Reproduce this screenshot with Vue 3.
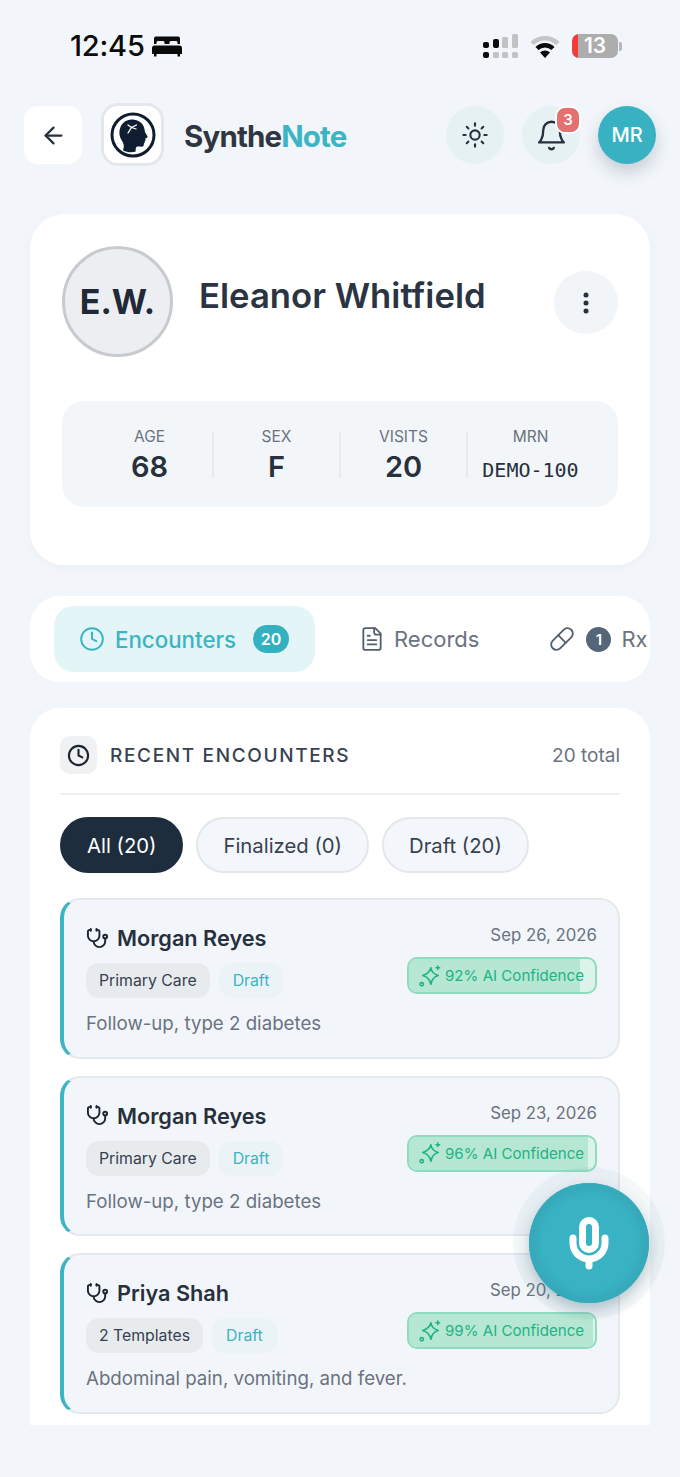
<template>
  <div class="phone">
    <div class="status-bar">
      <div class="status-left">
        <span class="time">12:45</span>
        <svg class="bed" viewBox="0 0 30 22" fill="#0b0b0b">
          <path d="M4 1.500h22a2 2 0 0 1 2 2V9h-2.500V7.500a1.500 1.500 0 0 0-1.500-1.500h-5a1.500 1.500 0 0 0-1.500 1.500V9h-5V7.500A1.500 1.500 0 0 0 11 6H6a1.500 1.500 0 0 0-1.500 1.500V9H2V3.500a2 2 0 0 1 2-2z" />
          <path d="M2.500 10.500h25a2.500 2.500 0 0 1 2.500 2.500v6h-2v2.500h-2.500V19h-21v2.500H2V19H0v-6a2.500 2.500 0 0 1 2.500-2.500z" />
        </svg>
      </div>
      <div class="status-right">
        <svg class="signal" width="35" height="24" viewBox="0 0 35 24">
          <rect x="0" y="8" width="6" height="6" rx="2" fill="#0b0b0b" />
          <rect x="10" y="5" width="6" height="9" rx="2" fill="#0b0b0b" />
          <rect x="19" y="3" width="6" height="11" rx="1.500" fill="#c0c2c4" />
          <rect x="29" y="0" width="6" height="14" rx="1.500" fill="#c0c2c4" />
          <rect x="0" y="18" width="6" height="6" rx="2" fill="#0b0b0b" />
          <rect x="10" y="18" width="6" height="6" rx="1.500" fill="#c0c2c4" />
          <rect x="19" y="18" width="6" height="6" rx="1.500" fill="#c0c2c4" />
          <rect x="29" y="18" width="6" height="6" rx="1.500" fill="#c0c2c4" />
        </svg>
        <svg class="wifi" width="30" height="23" viewBox="0 0 30 23" fill="none" stroke-width="4.500">
          <path d="M2 8.500a18.500 18.500 0 0 1 26 0" stroke="#c4c6c8" />
          <path d="M7 13.500a11.500 11.500 0 0 1 16 0" stroke="#0b0b0b" />
          <path d="M15 23l-5-5.500a7 7 0 0 1 10 0z" fill="#0b0b0b" stroke="none" />
        </svg>
        <div class="battery">
          <span class="battery-level">13</span>
          <span class="battery-cap"></span>
        </div>
      </div>
    </div>

    <header class="app-header">
      <button class="back-btn">
        <svg width="27" height="27" viewBox="0 0 24 24" fill="none" stroke="#27303c" stroke-width="2" stroke-linecap="round" stroke-linejoin="round">
          <path d="m12 19-7-7 7-7" />
          <path d="M19 12H5" />
        </svg>
      </button>
      <div class="logo">
        <svg width="46" height="46" viewBox="0 0 46 46">
          <circle cx="23" cy="23" r="21" fill="#fff" stroke="#0f1d30" stroke-width="3" />
          <path d="M22 7.500c7.500 0 12.500 5 12.800 11.500 0 1.500 3 5.200 2.900 6-.2 1-2.200 1-2.400 1.700-.2 1 .6 1.400.1 2-.5.600-.9.700-.8 1.400.2.800-.2 1.300-.8 1.600.2 1.800-.4 3-2.300 3-2 0-3.800-.5-5 .4-1 .9-.8 3-.8 4.400-3.800 1.400-8.500 1-12.800-1.200 1.600-3.500 1-6.200-.5-8.800-1.600-2.700-3.300-5.500-3-9.600C9.900 12.800 14.800 7.500 22 7.500z" fill="#0f1d30" />
          <path d="M18 21l3.500-5.500 5-2.500M21.500 15.500l-3.500-2.500M21.500 15.500l4.500 1.500" fill="none" stroke="#fff" stroke-width="1.300" stroke-linecap="round" />
        </svg>
      </div>
      <div class="brand">Synthe<span class="brand-accent">Note</span></div>
      <div class="header-actions">
        <button class="round-btn">
          <svg width="28" height="28" viewBox="0 0 24 24" fill="none" stroke="#27303c" stroke-width="1.800" stroke-linecap="round">
            <circle cx="12" cy="12" r="4" />
            <path d="M12 2v2" />
            <path d="M12 20v2" />
            <path d="m4.930 4.930 1.410 1.410" />
            <path d="m17.660 17.660 1.410 1.410" />
            <path d="M2 12h2" />
            <path d="M20 12h2" />
            <path d="m6.340 17.660-1.410 1.410" />
            <path d="m19.070 4.930-1.410 1.410" />
          </svg>
        </button>
        <button class="round-btn bell-btn">
          <svg width="33" height="33" viewBox="0 0 24 24" fill="none" stroke="#27303c" stroke-width="1.700" stroke-linecap="round" stroke-linejoin="round">
            <path d="M6 8a6 6 0 0 1 12 0c0 7 3 9 3 9H3s3-2 3-9" />
            <path d="M10.300 21a1.940 1.940 0 0 0 3.400 0" />
          </svg>
          <span class="bell-count">3</span>
        </button>
        <div class="user-avatar">MR</div>
      </div>
    </header>

    <main class="content">
      <section class="profile-card">
        <div class="profile-top">
          <div class="patient-avatar">E.W.</div>
          <h1 class="patient-name">Eleanor Whitfield</h1>
          <button class="more-btn">
            <svg width="6" height="24" viewBox="0 0 6 24" fill="#27303c">
              <circle cx="3" cy="4" r="2.500" />
              <circle cx="3" cy="12" r="2.500" />
              <circle cx="3" cy="20" r="2.500" />
            </svg>
          </button>
        </div>
        <div class="stats">
          <div v-for="stat in stats" :key="stat.label" class="stat">
            <span class="stat-label">{{ stat.label }}</span>
            <span class="stat-value" :class="{ mono: stat.mono }">{{ stat.value }}</span>
          </div>
        </div>
      </section>

      <nav class="tabs">
        <div class="tab tab-active">
          <svg width="26" height="26" viewBox="0 0 24 24" fill="none" stroke="#3cb4c3" stroke-width="1.800" stroke-linecap="round" stroke-linejoin="round">
            <circle cx="12" cy="12" r="10" />
            <polyline points="12 6 12 12 16 14" />
          </svg>
          <span>Encounters</span>
          <span class="tab-count">20</span>
        </div>
        <div class="tab tab-records">
          <svg width="26" height="26" viewBox="0 0 24 24" fill="none" stroke="#55606e" stroke-width="1.700" stroke-linecap="round" stroke-linejoin="round">
            <path d="M15 2H6a2 2 0 0 0-2 2v16a2 2 0 0 0 2 2h12a2 2 0 0 0 2-2V7Z" />
            <path d="M14 2v4a2 2 0 0 0 2 2h4" />
            <path d="M10 9H8" />
            <path d="M16 13H8" />
            <path d="M16 17H8" />
          </svg>
          <span>Records</span>
        </div>
        <div class="tab tab-rx">
          <svg width="26" height="26" viewBox="0 0 24 24" fill="none" stroke="#55606e" stroke-width="1.700" stroke-linecap="round" stroke-linejoin="round">
            <path d="m10.500 20.500 10-10a4.950 4.950 0 1 0-7-7l-10 10a4.950 4.950 0 1 0 7 7Z" />
            <path d="m8.500 8.500 7 7" />
          </svg>
          <span class="rx-count">1</span>
          <span>Rx</span>
        </div>
      </nav>

      <section class="encounters">
        <div class="section-head">
          <span class="section-icon">
            <svg width="23" height="23" viewBox="0 0 24 24" fill="none" stroke="#1c2633" stroke-width="2.200" stroke-linecap="round" stroke-linejoin="round">
              <circle cx="12" cy="12" r="10" />
              <polyline points="12 6 12 12 16 14" />
            </svg>
          </span>
          <h2 class="section-title">RECENT ENCOUNTERS</h2>
          <span class="section-total">20 total</span>
        </div>

        <div class="filters">
          <button v-for="filter in filters" :key="filter.label" class="filter" :class="{ 'filter-active': filter.active }">
            {{ filter.label }}
          </button>
        </div>

        <div class="encounter-list">
          <article v-for="item in encounters" :key="item.date" class="encounter">
            <div class="encounter-main">
              <div class="encounter-name">
                <svg width="23" height="23" viewBox="0 0 24 24" fill="none" stroke="#1c2633" stroke-width="2" stroke-linecap="round" stroke-linejoin="round">
                  <path d="M11 2v2" />
                  <path d="M5 2v2" />
                  <path d="M5 3H4a2 2 0 0 0-2 2v4a6 6 0 0 0 12 0V5a2 2 0 0 0-2-2h-1" />
                  <path d="M8 15a6 6 0 0 0 12 0v-3" />
                  <circle cx="20" cy="10" r="2" />
                </svg>
                <span>{{ item.name }}</span>
              </div>
              <div class="encounter-tags">
                <span class="tag">{{ item.tag }}</span>
                <span class="tag tag-draft">Draft</span>
              </div>
              <p class="encounter-desc">{{ item.desc }}</p>
            </div>
            <div class="encounter-side">
              <span class="encounter-date">{{ item.date }}</span>
              <div class="confidence">
                <span class="confidence-fill" :style="{ width: item.confidence + '%' }"></span>
                <svg class="confidence-icon" width="22" height="22" viewBox="0 0 24 24" fill="none" stroke="#1fb384" stroke-width="1.700" stroke-linecap="round" stroke-linejoin="round">
                  <path d="M13 3c.6 4.600 3 7 8 8.500-4.400 1.200-7 3.400-8 9.500-1.400-6-3.800-8.200-9-9.500 5.200-1.500 7.800-3.900 9-8.500z" />
                  <path d="M20.500 1v4" />
                  <path d="M22.500 3h-4" />
                  <circle cx="3" cy="21" r="1.800" />
                </svg>
                <span class="confidence-text">{{ item.confidence }}% AI Confidence</span>
              </div>
            </div>
          </article>
        </div>
      </section>
    </main>

    <button class="record-fab">
      <svg width="44" height="54" viewBox="0 0 44 54" fill="none" stroke="#fff" stroke-linecap="round">
        <rect x="15.500" y="4.500" width="13" height="29" rx="6.500" stroke-width="7" />
        <path d="M6 22v5a16 16 0 0 0 32 0v-5" stroke-width="7" />
        <path d="M22 44v6" stroke-width="7" />
      </svg>
    </button>
  </div>
</template>

<script setup>
const stats = [
  { label: 'AGE', value: '68' },
  { label: 'SEX', value: 'F' },
  { label: 'VISITS', value: '20' },
  { label: 'MRN', value: 'DEMO-100', mono: true }
];

const filters = [
  { label: 'All (20)', active: true },
  { label: 'Finalized (0)' },
  { label: 'Draft (20)' }
];

const encounters = [
  { name: 'Morgan Reyes', tag: 'Primary Care', desc: 'Follow-up, type 2 diabetes', date: 'Sep 26, 2026', confidence: 92 },
  { name: 'Morgan Reyes', tag: 'Primary Care', desc: 'Follow-up, type 2 diabetes', date: 'Sep 23, 2026', confidence: 96 },
  { name: 'Priya Shah', tag: '2 Templates', desc: 'Abdominal pain, vomiting, and fever.', date: 'Sep 20, 2026', confidence: 99 }
];
</script>

<style>
body {
  background: #f2f6fa;
}
</style>

<style scoped>
.phone {
  position: relative;
  width: 680px;
  height: 1477px;
  overflow: hidden;
  background: #f2f6fa;
  color: #2b3442;
  font-family: Inter, "Noto Sans", sans-serif;
}

button {
  border: none;
  padding: 0;
  font-family: inherit;
  display: flex;
  align-items: center;
  justify-content: center;
}

.status-bar {
  height: 92px;
  box-sizing: border-box;
  padding: 28px 58px 0 70px;
  display: flex;
  justify-content: space-between;
  align-items: flex-start;
}

.status-left {
  display: flex;
  align-items: center;
  gap: 7px;
}

.time {
  font-size: 29px;
  font-weight: 500;
  letter-spacing: -0.200px;
  color: #0b0b0b;
  line-height: 36px;
}

.bed {
  width: 30px;
  height: 22px;
}

.status-right {
  display: flex;
  align-items: center;
  gap: 12px;
  padding-top: 6px;
}

.battery {
  display: flex;
  align-items: center;
  gap: 1px;
}

.battery-level {
  width: 46px;
  height: 24px;
  border-radius: 7px;
  background: linear-gradient(90deg, #f23b3b 0 6px, #adadad 6px);
  color: #fff;
  font-size: 21px;
  font-weight: 600;
  line-height: 24px;
  text-align: center;
}

.battery-cap {
  width: 3px;
  height: 9px;
  border-radius: 0 2px 2px 0;
  background: #b8b8b8;
}

.app-header {
  height: 122px;
  box-sizing: border-box;
  padding: 11px 24px 0;
  display: flex;
  align-items: flex-start;
}

.back-btn {
  width: 58px;
  height: 58px;
  border-radius: 14px;
  background: #fff;
  margin-top: 3px;
}

.logo {
  width: 63px;
  height: 63px;
  box-sizing: border-box;
  margin-left: 19px;
  border: 3px solid #e4e7eb;
  border-radius: 17px;
  background: #fff;
  display: flex;
  align-items: center;
  justify-content: center;
}

.brand {
  margin-left: 20px;
  font-size: 29.500px;
  font-weight: 700;
  letter-spacing: -0.850px;
  line-height: 67px;
  color: #2f3642;
}

.brand-accent {
  color: #3cb4c3;
}

.header-actions {
  margin-left: auto;
  margin-top: 3px;
  display: flex;
  gap: 18px;
}

.round-btn {
  position: relative;
  width: 58px;
  height: 58px;
  border-radius: 50%;
  background: #e6f1f4;
}

.bell-count {
  position: absolute;
  top: 0;
  right: -1px;
  width: 26px;
  height: 28px;
  box-sizing: border-box;
  border: 2px solid #fff;
  border-radius: 10px;
  background: #e2716f;
  color: #fff;
  font-size: 15px;
  font-weight: 600;
  line-height: 24px;
  text-align: center;
}

.user-avatar {
  width: 58px;
  height: 58px;
  border-radius: 50%;
  background: #38b2c3;
  color: #fff;
  font-size: 20px;
  font-weight: 500;
  line-height: 58px;
  text-align: center;
  box-shadow: 0 8px 16px rgba(40, 60, 80, 0.22);
}

.content {
  height: 1211px;
  overflow: hidden;
  padding: 0 30px;
}

.profile-card {
  height: 351px;
  box-sizing: border-box;
  padding: 32px 32px 0;
  background: #fff;
  border-radius: 34px;
  box-shadow: 0 2px 10px rgba(120, 140, 160, 0.06);
}

.profile-top {
  display: flex;
  align-items: flex-start;
  height: 155px;
}

.patient-avatar {
  width: 111px;
  height: 111px;
  box-sizing: border-box;
  border: 3px solid #c8cbce;
  border-radius: 50%;
  background: #eceef1;
  color: #1f2937;
  font-size: 34px;
  font-weight: 700;
  line-height: 105px;
  text-align: center;
  flex: none;
}

.patient-name {
  margin: 23px 0 0 26px;
  font-size: 34.700px;
  font-weight: 600;
  line-height: 52px;
  color: #2b3442;
}

.more-btn {
  margin: 25px 0 0 auto;
  width: 64px;
  height: 63px;
  border-radius: 50%;
  background: #f1f5f8;
}

.stats {
  height: 106px;
  box-sizing: border-box;
  padding: 24px 25px 24px 23px;
  border-radius: 22px;
  background: #f2f6f9;
  display: grid;
  grid-template-columns: repeat(4, 1fr);
}

.stat {
  display: flex;
  flex-direction: column;
  align-items: center;
  border-left: 2px solid #e6eaee;
  height: 46px;
  margin-top: 7px;
}

.stat:first-child {
  border-left-color: transparent;
}

.stat-label {
  margin-top: -6px;
  font-size: 15.500px;
  line-height: 22px;
  color: #6b7280;
}

.stat-value {
  font-size: 29px;
  font-weight: 600;
  line-height: 38px;
  color: #27303c;
}

.stat-value.mono {
  font-family: "DejaVu Sans Mono", monospace;
  font-size: 20px;
  font-weight: 400;
  line-height: 44px;
}

.tabs {
  margin-top: 31px;
  height: 86px;
  box-sizing: border-box;
  padding: 10px 3px 10px 24px;
  border-radius: 30px;
  background: #fff;
  display: flex;
  align-items: center;
  overflow: hidden;
}

.tab {
  display: flex;
  align-items: center;
  font-size: 22px;
  color: #6b7280;
  flex: none;
}

.tab-active {
  width: 261px;
  height: 66px;
  box-sizing: border-box;
  padding-left: 25px;
  gap: 10px;
  border-radius: 20px;
  background: #e4f5f7;
  color: #3cb4c3;
  font-size: 22.300px;
  font-weight: 500;
}

.tab-count {
  margin-left: 7px;
  min-width: 36px;
  height: 28px;
  border-radius: 14px;
  background: #33b1c1;
  color: #fff;
  font-size: 16px;
  font-weight: 600;
  line-height: 28px;
  text-align: center;
}

.tab-records {
  margin-left: 44px;
  gap: 9px;
}

.tab-rx {
  margin-left: 70px;
  gap: 10px;
}

.rx-count {
  width: 25px;
  height: 25px;
  margin-left: 1px;
  border-radius: 50%;
  background: #55667a;
  color: #fff;
  font-size: 15px;
  font-weight: 600;
  line-height: 25px;
  text-align: center;
}

.encounters {
  margin-top: 26px;
  padding: 28px 30px 30px;
  border-radius: 30px 30px 0 0;
  background: #fff;
}

.section-head {
  display: flex;
  align-items: center;
  height: 38px;
  padding-bottom: 19px;
  border-bottom: 2px solid #eef1f4;
}

.section-icon {
  width: 37px;
  height: 38px;
  border-radius: 10px;
  background: #eff1f3;
  display: flex;
  align-items: center;
  justify-content: center;
}

.section-title {
  margin: 0 0 0 13px;
  font-size: 19px;
  font-weight: 500;
  letter-spacing: 1.650px;
  color: #374151;
}

.section-total {
  margin-left: auto;
  font-size: 19px;
  color: #6b7280;
}

.filters {
  margin-top: 22px;
  display: flex;
  gap: 13px;
}

.filter {
  height: 56px;
  box-sizing: border-box;
  padding: 0 25px;
  border: 2px solid #e3e7eb;
  border-radius: 28px;
  background: #f3f6fa;
  color: #374151;
  font-size: 20.300px;
}

.filter-active {
  border-color: #1e2d3d;
  background: #1e2d3d;
  color: #fff;
}

.encounter-list {
  margin-top: 25px;
  display: flex;
  flex-direction: column;
  gap: 17px;
}

.encounter {
  height: 160.500px;
  box-sizing: border-box;
  padding: 20px 21px 0 22px;
  border: 2px solid #e5e8ec;
  border-left: 4px solid #3cb4c3;
  border-radius: 20px;
  background: #f2f6fa;
  display: flex;
  justify-content: space-between;
}

.encounter-name {
  display: flex;
  align-items: center;
  gap: 8px;
  height: 36px;
  font-size: 21.700px;
  font-weight: 600;
  color: #27303c;
}

.encounter-tags {
  margin-top: 7px;
  display: flex;
  gap: 9px;
}

.tag {
  height: 35px;
  padding: 0 13px;
  border-radius: 13px;
  background: #e8ebee;
  color: #374151;
  font-size: 15.800px;
  line-height: 35px;
}

.tag-draft {
  padding: 0 14px;
  background: #ebf3f7;
  color: #3cb4c3;
}

.encounter-desc {
  margin: 12px 0 0;
  font-size: 18.700px;
  line-height: 28px;
  color: #6b7280;
}

.encounter-side {
  display: flex;
  flex-direction: column;
  align-items: flex-end;
}

.encounter-date {
  margin-top: 1px;
  font-size: 16.800px;
  line-height: 28px;
  color: #6b7280;
}

.confidence {
  position: relative;
  margin-top: 8px;
  width: 190px;
  height: 37px;
  box-sizing: border-box;
  padding-left: 10px;
  border: 2px solid #8ddcc0;
  border-radius: 10px;
  background: #dcf3ea;
  overflow: hidden;
  display: flex;
  align-items: center;
  gap: 4px;
}

.confidence-fill {
  position: absolute;
  left: 0;
  top: 0;
  bottom: 0;
  background: #b5e7d3;
}

.confidence-icon {
  position: relative;
  flex: none;
}

.confidence-text {
  position: relative;
  font-size: 15.100px;
  color: #1fb384;
  white-space: nowrap;
}

.record-fab {
  position: absolute;
  left: 529px;
  top: 1183px;
  width: 120px;
  height: 120px;
  border-radius: 50%;
  background: #39b3c4;
  box-shadow: inset 0 0 6px 9px #37aabb, 0 6px 14px rgba(40, 80, 100, 0.3), 0 0 0 16px rgba(120, 150, 165, 0.07);
}
</style>
